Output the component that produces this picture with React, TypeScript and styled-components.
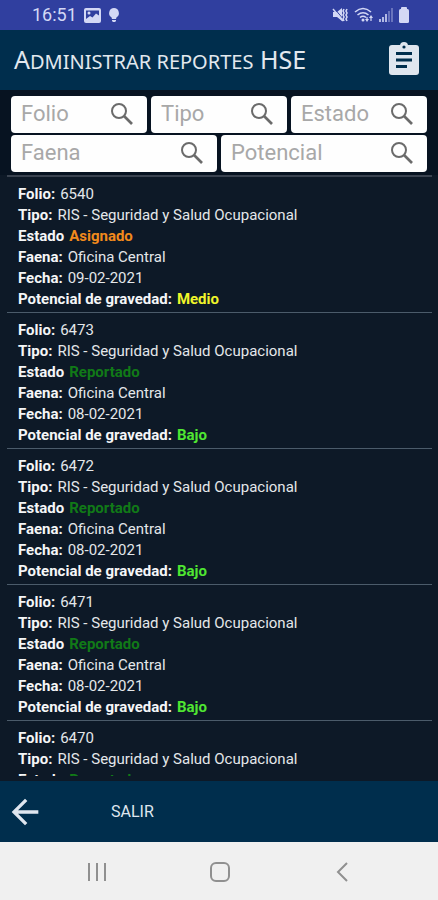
import React from "react";
import styled, { createGlobalStyle } from "styled-components";
import { MdArrowBack } from "react-icons/md";

const GlobalStyle = createGlobalStyle`
  * { box-sizing: border-box; }
  body { margin: 0; font-family: Roboto, "Liberation Sans", sans-serif; background: #0d1927; }
  button { border: 0; padding: 0; background: none; color: inherit; font: inherit; cursor: pointer; }
`;

const Screen = styled.div`
  display: flex;
  flex-direction: column;
  height: 100vh;
  background: #0d1927;
`;

const StatusBar = styled.div`
  display: flex;
  align-items: center;
  flex: none;
  gap: 7px;
  height: 30px;
  padding: 0 28px 0 32px;
  background: #303f9f;
  color: #d3d8f5;
`;

const Clock = styled.time`
  font-size: 18px;
  line-height: 30px;
`;

const StatusIcons = styled.div`
  display: flex;
  align-items: center;
  gap: 5px;
  margin-left: auto;
`;

const TitleBar = styled.header`
  display: flex;
  align-items: center;
  justify-content: space-between;
  flex: none;
  height: 60px;
  padding: 0 14px;
  background: #002e4d;
  color: #e2e8ee;
`;

const Title = styled.h1`
  margin: 0;
  font: 400 25px/30px "Noto Sans", sans-serif;
  white-space: nowrap;
`;

const SmallCaps = styled.span`
  font-size: 20px;
  text-transform: uppercase;
`;

const IconButton = styled.button`
  display: flex;
  color: #dfe6ef;
`;

const Filters = styled.form`
  display: flex;
  flex-direction: column;
  flex: none;
  gap: 2px;
  padding: 6px 11px 3px;
  background: #071321;
`;

const FilterRow = styled.div`
  display: flex;
  gap: 4px;
`;

const Field = styled.div`
  display: flex;
  align-items: center;
  flex: 1 1 0;
  min-width: 0;
  height: 37px;
  padding: 0 10px 2px 10px;
  border-radius: 4px;
  background: #fefefe;
`;

const FieldInput = styled.input`
  flex: 1 1 0;
  min-width: 0;
  padding: 0;
  border: 0;
  outline: 0;
  background: transparent;
  color: #333;
  font: 400 22px/30px Roboto, sans-serif;
  &::placeholder { color: #a8a8a8; opacity: 1; }
`;

const SearchButton = styled.button`
  display: flex;
  flex: none;
  color: #6b6b6b;
`;

const Records = styled.main`
  flex: 1 1 0;
  min-height: 0;
  margin: 0 6px 5px 7px;
  border-top: 2px solid #3a4350;
  overflow-y: auto;
  scrollbar-width: none;
`;

const Record = styled.dl`
  margin: 0;
  padding: 7px 11px 2px;
  border-bottom: 1px solid #4b5b6a;
`;

const Line = styled.div`
  display: flex;
  gap: 5px;
  color: #e4e7ea;
  font-size: 15px;
  line-height: 21px;
  white-space: nowrap;
`;

const Label = styled.dt`
  color: #f5f6f7;
  font-weight: 700;
`;

const Value = styled.dd<{ $color?: string }>`
  margin: 0;
  color: ${(p) => p.$color ?? "inherit"};
  font-weight: ${(p) => (p.$color ? 700 : 400)};
`;

const Footer = styled.footer`
  display: flex;
  align-items: center;
  flex: none;
  gap: 66px;
  height: 61px;
  padding: 0 5px;
  background: #002e4d;
`;

const ExitButton = styled.button`
  color: #dfe6ef;
  font-size: 16px;
  line-height: 24px;
`;

const SystemNav = styled.nav`
  display: grid;
  grid-template-columns: repeat(3, 123px);
  justify-content: center;
  align-items: center;
  flex: none;
  height: 58px;
  padding: 2px 0 0 2px;
  background: #f0f0f0;
`;

const NavButton = styled.button`
  display: flex;
  justify-content: center;
  color: #909090;
`;

const PhotoIcon = () => (
  <svg width="17" height="15" viewBox="0 0 17 15" aria-hidden="true">
    <rect width="17" height="15" rx="2" fill="currentColor" />
    <path d="M2 2.500h13v5L12 5.500 8.500 9.500 6 8l-4 3z" fill="#303f9f" />
    <circle cx="5" cy="5" r="1.500" fill="currentColor" />
  </svg>
);

const BulbIcon = () => (
  <svg width="12" height="14" viewBox="0 0 12 14" aria-hidden="true">
    <path d="M6 0a5 5 0 0 0-2.600 9.200L4 11h4l.6-1.800A5 5 0 0 0 6 0zM4 12h4v1L7 14H5l-1-1z" fill="currentColor" />
  </svg>
);

const VibrateMuteIcon = () => (
  <svg width="17" height="16" viewBox="0 0 17 16" fill="none" stroke="currentColor" aria-hidden="true">
    <path d="M1 5h4l5-4v13l-5-4H1z" fill="currentColor" stroke="none" />
    <path d="M2 1l10 12" stroke="#303f9f" />
    <path d="M1 2l10 12" strokeWidth="1.400" />
    <path d="M12 2l-1 2 1 2-1 2 1 2-1 2 1 2M15 2l-1 2 1 2-1 2 1 2-1 2 1 2" strokeWidth="1.600" />
  </svg>
);

const WifiIcon = () => (
  <svg width="20" height="16" viewBox="0 0 20 16" fill="none" stroke="currentColor" strokeWidth="1.600" aria-hidden="true">
    <path d="M1 5q8-7 16 0M3.500 8q5.500-4.500 11 0M6 10.500q3-2.500 6 0" />
    <circle cx="9" cy="13" r="1.500" fill="currentColor" stroke="none" />
    <path d="M11 12h4l-2 3zM15 11l2-3 2 3z" fill="currentColor" stroke="none" />
    <path d="M13 10v3M17 10v4" strokeWidth="1.200" />
  </svg>
);

const SignalIcon = () => (
  <svg width="14" height="14" viewBox="0 0 14 14" fill="currentColor" aria-hidden="true">
    <path d="M0 11h2v3H0zM3 9h2v5H3zM6 6h2v8H6z" opacity=".8" />
    <path d="M9 3h2v11H9zM12 0h2v14h-2z" opacity=".35" />
  </svg>
);

const BatteryIcon = () => (
  <svg width="12" height="16" viewBox="0 0 12 16" fill="currentColor" aria-hidden="true">
    <rect x="3" width="6" height="4" rx="1" />
    <rect x="1" y="2" width="10" height="14" rx="1.500" />
  </svg>
);

const ClipboardIcon = () => (
  <svg width="40" height="40" viewBox="0 0 40 40" aria-hidden="true">
    <rect x="5" y="5" width="30" height="30" rx="3" fill="currentColor" />
    <circle cx="20" cy="6" r="4" fill="currentColor" />
    <circle cx="20" cy="7" r="1.600" fill="#002e4d" />
    <path d="M12 13.500h16M12 20h16M12 26.500h11" stroke="#002e4d" strokeWidth="3" />
  </svg>
);

const SearchIcon = () => (
  <svg width="30" height="30" viewBox="0 0 30 30" fill="none" stroke="currentColor" strokeWidth="2" aria-hidden="true">
    <circle cx="12" cy="12" r="7" />
    <path d="M17 17l8 8" strokeWidth="2.600" />
  </svg>
);

const RecentsIcon = () => (
  <svg width="20" height="20" viewBox="0 0 20 20" stroke="currentColor" strokeWidth="2" aria-hidden="true">
    <path d="M2 1v18M10 1v18M18 1v18" />
  </svg>
);

const HomeIcon = () => (
  <svg width="20" height="20" viewBox="0 0 20 20" fill="none" stroke="currentColor" strokeWidth="2" aria-hidden="true">
    <rect x="1" y="1" width="18" height="18" rx="5" />
  </svg>
);

const BackIcon = () => (
  <svg width="20" height="20" viewBox="0 0 20 20" fill="none" stroke="currentColor" strokeWidth="2" aria-hidden="true">
    <path d="M14 1L5 10l9 9" />
  </svg>
);

const ORANGE = "#f28a1c";
const GREEN = "#117a17";
const YELLOW = "#f0f52a";
const LIME = "#4fe632";

const filterRows = [
  ["Folio", "Tipo", "Estado"],
  ["Faena", "Potencial"],
];

const reports = [
  { folio: "6540", state: "Asignado", stateColor: ORANGE, date: "09-02-2021", risk: "Medio", riskColor: YELLOW },
  ...["6473", "6472", "6471", "6470"].map((folio) => ({
    folio,
    state: "Reportado",
    stateColor: GREEN,
    date: "08-02-2021",
    risk: "Bajo",
    riskColor: LIME,
  })),
];

export default function App() {
  return (
    <Screen>
      <GlobalStyle />
      <StatusBar>
        <Clock>16:51</Clock>
        <PhotoIcon />
        <BulbIcon />
        <StatusIcons>
          <VibrateMuteIcon />
          <WifiIcon />
          <SignalIcon />
          <BatteryIcon />
        </StatusIcons>
      </StatusBar>
      <TitleBar>
        <Title>
          A<SmallCaps>dministrar reportes</SmallCaps> HSE
        </Title>
        <IconButton type="button" aria-label="Reportes">
          <ClipboardIcon />
        </IconButton>
      </TitleBar>
      <Filters onSubmit={(e) => e.preventDefault()}>
        {filterRows.map((row) => (
          <FilterRow key={row[0]}>
            {row.map((name) => (
              <Field key={name}>
                <FieldInput type="text" placeholder={name} aria-label={name} />
                <SearchButton type="submit" aria-label={`Buscar ${name}`}>
                  <SearchIcon />
                </SearchButton>
              </Field>
            ))}
          </FilterRow>
        ))}
      </Filters>
      <Records>
        {reports.map((r) => (
          <Record key={r.folio}>
            <Line><Label>Folio:</Label><Value>{r.folio}</Value></Line>
            <Line><Label>Tipo:</Label><Value>RIS - Seguridad y Salud Ocupacional</Value></Line>
            <Line><Label>Estado</Label><Value $color={r.stateColor}>{r.state}</Value></Line>
            <Line><Label>Faena:</Label><Value>Oficina Central</Value></Line>
            <Line><Label>Fecha:</Label><Value>{r.date}</Value></Line>
            <Line><Label>Potencial de gravedad:</Label><Value $color={r.riskColor}>{r.risk}</Value></Line>
          </Record>
        ))}
      </Records>
      <Footer>
        <IconButton type="button" aria-label="Volver">
          <MdArrowBack size={40} />
        </IconButton>
        <ExitButton type="button">SALIR</ExitButton>
      </Footer>
      <SystemNav>
        <NavButton type="button" aria-label="Recientes"><RecentsIcon /></NavButton>
        <NavButton type="button" aria-label="Inicio"><HomeIcon /></NavButton>
        <NavButton type="button" aria-label="Atrás"><BackIcon /></NavButton>
      </SystemNav>
    </Screen>
  );
}
